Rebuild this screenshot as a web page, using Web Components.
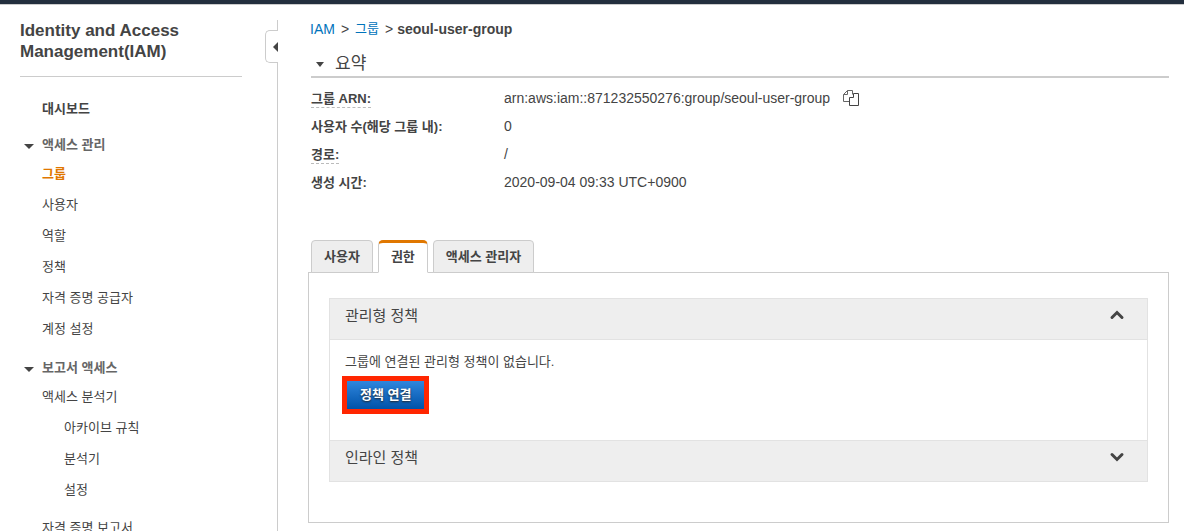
<!DOCTYPE html>
<html lang="ko">
<head>
<meta charset="utf-8">
<meta name="viewport" content="width=device-width, initial-scale=1">
<title>IAM</title>
<style>
  body {
    margin: 0;
    background: #fff;
    color: #444;
    font-family: "Liberation Sans", "Noto Sans CJK KR", sans-serif;
    font-size: 13px;
    line-height: 20px;
  }
</style>
</head>
<body>

<app-shell>
  <side-nav slot="nav" heading="Identity and Access Management(IAM)">
    <nav-item strong>대시보드</nav-item>
    <nav-group label="액세스 관리">
      <nav-item active>그룹</nav-item>
      <nav-item>사용자</nav-item>
      <nav-item>역할</nav-item>
      <nav-item>정책</nav-item>
      <nav-item>자격 증명 공급자</nav-item>
      <nav-item>계정 설정</nav-item>
    </nav-group>
    <nav-group label="보고서 액세스">
      <nav-item>액세스 분석기</nav-item>
      <nav-item nested>아카이브 규칙</nav-item>
      <nav-item nested>분석기</nav-item>
      <nav-item nested>설정</nav-item>
      <nav-item apart>자격 증명 보고서</nav-item>
    </nav-group>
  </side-nav>

  <bread-crumb></bread-crumb>
  <group-summary></group-summary>
  <tab-panel>
    <policy-section heading="관리형 정책" open>
      <p>그룹에 연결된 관리형 정책이 없습니다.</p>
      <primary-button marked>정책 연결</primary-button>
    </policy-section>
    <policy-section heading="인라인 정책"></policy-section>
  </tab-panel>
</app-shell>

<script>
class AppShell extends HTMLElement {
  constructor() {
    super();
    this.attachShadow({ mode: "open" });
  }
  connectedCallback() {
    this.shadowRoot.innerHTML = `
    <style>
      :host {
        display: grid;
        grid-template-rows: auto 1fr;
        height: 100vh;
        overflow: hidden;
      }
      header {
        height: 4px;
        background: #232f3e;
        border-bottom: 1px solid #ccc;
      }
      .columns {
        display: grid;
        grid-template-columns: 278px minmax(0, 1fr);
        min-height: 0;
      }
      main {
        padding: 14px 15px 8px 30px;
      }
    </style>
    <header></header>
    <div class="columns">
      <slot name="nav"></slot>
      <main><slot></slot></main>
    </div>
    `;
  }
}

class SideNav extends HTMLElement {
  constructor() {
    super();
    this.attachShadow({ mode: "open" });
  }
  connectedCallback() {
    this.shadowRoot.innerHTML = `
    <style>
      :host {
        display: grid;
        grid-template-columns: minmax(0, 1fr) 13px;
        min-height: 0;
        overflow: hidden;
      }
      nav {
        padding: 15px 23px 0 20px;
      }
      h1 {
        margin: 0 0 16px;
        padding-bottom: 14px;
        border-bottom: 1px solid #ccc;
        font-size: 17px;
        line-height: 21px;
      }
      .edge {
        display: flex;
        flex-direction: column;
        padding-top: 15px;
      }
      .edge::before {
        content: "";
        height: 10px;
        border-right: 1px solid #ccc;
      }
      .edge::after {
        content: "";
        flex: 1;
        border-right: 1px solid #ccc;
      }
      button {
        display: flex;
        align-items: center;
        justify-content: flex-end;
        width: 13px;
        height: 33px;
        padding: 0;
        border: 1px solid #ccc;
        border-right: 0;
        border-radius: 5px 0 0 5px;
        background: #fff;
      }
    </style>
    <nav>
      <h1>${this.getAttribute("heading")}</h1>
      <slot></slot>
    </nav>
    <div class="edge">
      <button type="button" aria-label="접기">
        <svg width="6" height="10" viewBox="0 0 6 10"><path d="M6 0v10L1 5z" fill="#444"/></svg>
      </button>
    </div>
    `;
  }
}

class NavGroup extends HTMLElement {
  constructor() {
    super();
    this.attachShadow({ mode: "open" });
  }
  connectedCallback() {
    this.shadowRoot.innerHTML = `
    <style>
      :host {
        display: block;
        margin-bottom: 10px;
      }
      button {
        display: flex;
        align-items: center;
        gap: 8px;
        height: 27px;
        padding: 0 0 0 4px;
        border: 0;
        background: none;
        color: #666;
        font: inherit;
        font-weight: bold;
      }
      svg {
        margin-top: 4px;
      }
    </style>
    <button type="button" aria-expanded="true">
      <svg width="10" height="6" viewBox="0 0 10 6"><path d="M0 0h10L5 5z" fill="#444"/></svg>
      <span>${this.getAttribute("label")}</span>
    </button>
    <slot></slot>
    `;
  }
}

class NavItem extends HTMLElement {
  constructor() {
    super();
    this.attachShadow({ mode: "open" });
  }
  connectedCallback() {
    this.shadowRoot.innerHTML = `
    <style>
      :host {
        display: block;
        padding-left: 22px;
        line-height: 31px;
      }
      :host([strong]) {
        margin-bottom: 7px;
        font-weight: bold;
      }
      :host([nested]) {
        padding-left: 44px;
      }
      :host([apart]) {
        margin-top: 7px;
      }
      a {
        color: #444;
        text-decoration: none;
      }
      :host([active]) a {
        color: #e07700;
        font-weight: bold;
      }
    </style>
    <a href="#"><slot></slot></a>
    `;
  }
}

class BreadCrumb extends HTMLElement {
  constructor() {
    super();
    this.attachShadow({ mode: "open" });
  }
  connectedCallback() {
    this.shadowRoot.innerHTML = `
    <style>
      :host {
        display: block;
        padding-left: 2px;
        font-size: 14px;
      }
      nav {
        display: flex;
        gap: 6px;
      }
      a {
        color: #0073bb;
        text-decoration: none;
      }
      .ko {
        font-size: 13px;
      }
      strong {
        margin-left: -2px;
      }
    </style>
    <nav>
      <a href="#">IAM</a><span>&gt;</span>
      <a class="ko" href="#">그룹</a><span>&gt;</span>
      <strong>seoul-user-group</strong>
    </nav>
    `;
  }
}

class GroupSummary extends HTMLElement {
  constructor() {
    super();
    this.attachShadow({ mode: "open" });
  }
  connectedCallback() {
    this.shadowRoot.innerHTML = `
    <style>
      :host {
        display: block;
        margin: 12px 0 43px;
        padding-left: 3px;
      }
      h2 {
        display: flex;
        align-items: center;
        gap: 11px;
        margin: 0 0 7px;
        padding-left: 5px;
        border-bottom: 2px solid #ccc;
        font-size: 17px;
        font-weight: normal;
        line-height: 25px;
      }
      h2 svg {
        margin-top: 2px;
      }
      dl {
        display: grid;
        grid-template-columns: 193px 1fr;
        margin: 0;
        line-height: 28px;
      }
      dt {
        font-weight: bold;
      }
      dt span {
        display: inline-block;
        line-height: 17px;
      }
      .hint {
        border-bottom: 1px dashed #bbb;
      }
      dd {
        display: flex;
        align-items: center;
        gap: 13px;
        height: 26px;
        margin: 0;
        font-size: 14px;
        line-height: 26px;
      }
      button {
        display: flex;
        padding: 0;
        border: 0;
        background: none;
      }
    </style>
    <h2>
      <svg width="8" height="5" viewBox="0 0 8 5"><path d="M0 0h8L4 5z" fill="#444"/></svg>
      요약
    </h2>
    <dl>
      <dt><span class="hint">그룹 ARN:</span></dt>
      <dd>
        arn:aws:iam::871232550276:group/seoul-user-group
        <button type="button" aria-label="복사">
          <svg width="17" height="16" viewBox="0 0 17 16" fill="none">
            <path d="M6.500 11.500h-6v-7l4-4h5v4M4.500 .5v4h-4" stroke="#666"/>
            <path d="M10.500 3.500h5v12h-9v-8h4z" fill="#fff" stroke="#444"/>
          </svg>
        </button>
      </dd>
      <dt><span>사용자 수(해당 그룹 내):</span></dt>
      <dd>0</dd>
      <dt><span class="hint">경로:</span></dt>
      <dd>/</dd>
      <dt><span>생성 시간:</span></dt>
      <dd>2020-09-04 09:33 UTC+0900</dd>
    </dl>
    `;
  }
}

class TabPanel extends HTMLElement {
  constructor() {
    super();
    this.attachShadow({ mode: "open" });
  }
  connectedCallback() {
    this.shadowRoot.innerHTML = `
    <style>
      :host {
        display: block;
      }
      .tabs {
        display: flex;
        gap: 5px;
        margin-bottom: -1px;
        padding-left: 3px;
      }
      button {
        position: relative;
        height: 33px;
        padding: 0 12px;
        border: 1px solid #ccc;
        border-radius: 4px 4px 0 0;
        background: #eee;
        color: #444;
        font: inherit;
        font-weight: bold;
      }
      button[aria-selected="true"] {
        padding-bottom: 2px;
        border-top: 3px solid #e07700;
        border-bottom-color: #fff;
        border-radius: 5px 5px 0 0;
        background: #fff;
      }
      .panel {
        padding: 25px 20px 40px;
        border: 1px solid #ccc;
      }
    </style>
    <div class="tabs" role="tablist">
      <button type="button" role="tab" aria-selected="false">사용자</button>
      <button type="button" role="tab" aria-selected="true">권한</button>
      <button type="button" role="tab" aria-selected="false">액세스 관리자</button>
    </div>
    <div class="panel" role="tabpanel"><slot></slot></div>
    `;
  }
}

class PolicySection extends HTMLElement {
  constructor() {
    super();
    this.attachShadow({ mode: "open" });
  }
  connectedCallback() {
    const open = this.hasAttribute("open");
    this.shadowRoot.innerHTML = `
    <style>
      :host {
        display: block;
        border: 1px solid #e2e2e2;
      }
      :host(:not([open])) {
        border-top: 0;
      }
      h3 {
        margin: 0;
        font: inherit;
      }
      button {
        display: flex;
        justify-content: space-between;
        align-items: center;
        width: 100%;
        height: 40px;
        padding: 0 22px 6px 15px;
        border: 0;
        background: #eee;
        color: #444;
        font: inherit;
        font-size: 15px;
      }
      svg {
        margin-bottom: 2px;
      }
      .body {
        padding: 12px 12px 26px;
        border-top: 1px solid #e2e2e2;
      }
      ::slotted(p) {
        margin: 0 0 4px 3px;
      }
    </style>
    <h3>
      <button type="button" aria-expanded="${open}">
        <span>${this.getAttribute("heading")}</span>
        <svg width="16" height="10" viewBox="0 0 16 10" fill="none" stroke="#444" stroke-width="3" stroke-linecap="round">
          <path d="${open ? "M3 7.500l5-5 5 5" : "M3 2.500l5 5 5-5"}"/>
        </svg>
      </button>
    </h3>
    ${open ? `<div class="body"><slot></slot></div>` : ""}
    `;
  }
}

class PrimaryButton extends HTMLElement {
  constructor() {
    super();
    this.attachShadow({ mode: "open" });
  }
  connectedCallback() {
    this.shadowRoot.innerHTML = `
    <style>
      :host {
        display: inline-flex;
        vertical-align: top;
      }
      :host([marked]) {
        border: 5px solid #ff2600;
      }
      button {
        height: 28px;
        padding: 0 13px;
        border: 0;
        background: linear-gradient(#2f86dd, #0052a8);
        color: #fff;
        font: inherit;
        font-weight: bold;
        text-shadow: 0 1px 2px #222;
      }
    </style>
    <button type="button"><slot></slot></button>
    `;
  }
}

customElements.define("app-shell", AppShell);
customElements.define("side-nav", SideNav);
customElements.define("nav-group", NavGroup);
customElements.define("nav-item", NavItem);
customElements.define("bread-crumb", BreadCrumb);
customElements.define("group-summary", GroupSummary);
customElements.define("tab-panel", TabPanel);
customElements.define("policy-section", PolicySection);
customElements.define("primary-button", PrimaryButton);
</script>
</body>
</html>
